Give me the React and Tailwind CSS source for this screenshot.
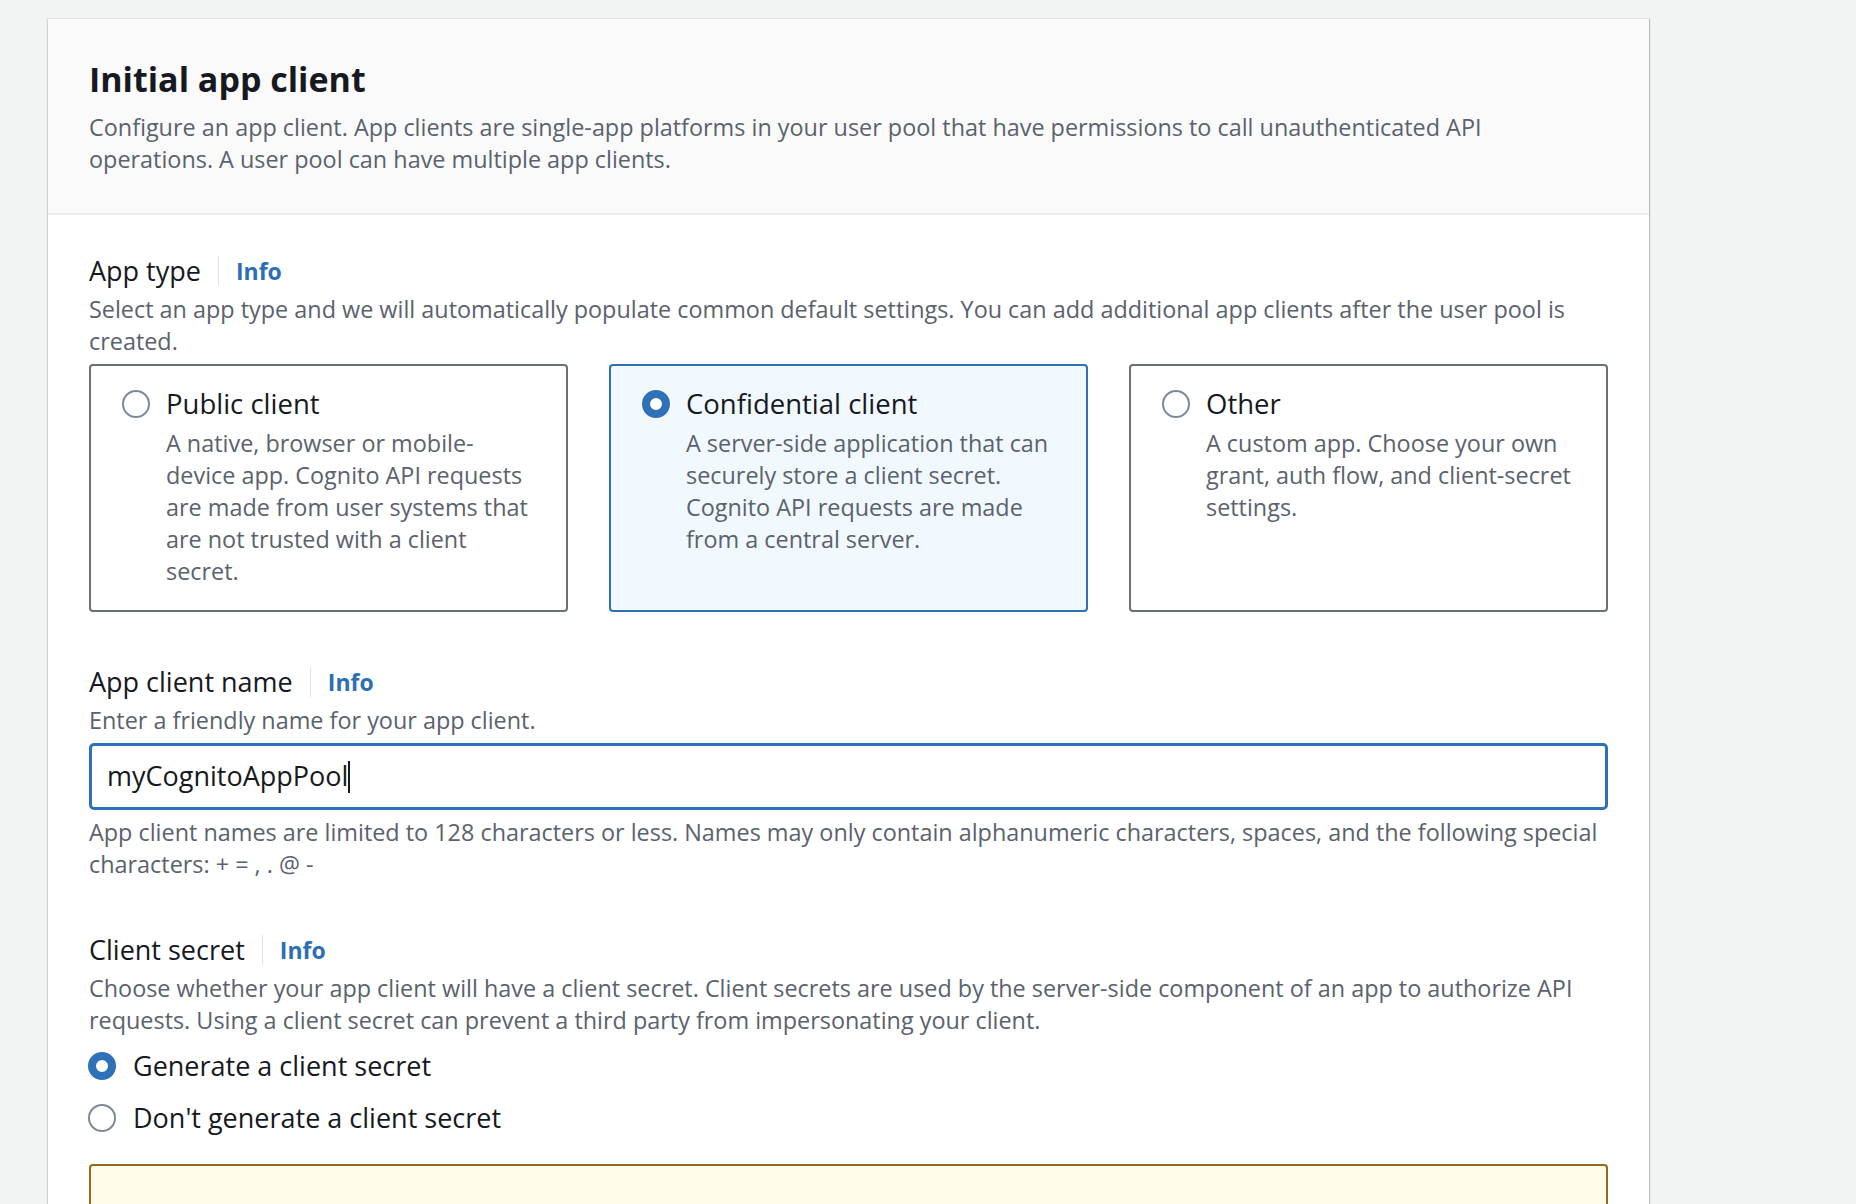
import { useState } from 'react';

const Label = ({ children }) => (
  <div className="flex items-center h-[36px]">
    <span className="text-[27px] text-[#16191f]">{children}</span>
    <span className="mx-[17px] h-[30px] w-px bg-[#e2e4e6]" />
    <a className="text-[23px] font-bold text-[#2d6eb6]">Info</a>
  </div>
);

const Lines = ({ lines, className = '' }) => (
  <p className={`text-[23.4px] leading-[32px] text-[#5a626d] ${className}`}>
    {lines.map((l) => (
      <span key={l} className="block whitespace-nowrap">{l}</span>
    ))}
  </p>
);

const Radio = ({ checked }) =>
  checked ? (
    <span className="shrink-0 w-[28px] h-[28px] rounded-full border-[8px] border-[#2f71b9] bg-white" />
  ) : (
    <span className="shrink-0 w-[28px] h-[28px] rounded-full border-2 border-[#7d8998] bg-white" />
  );

const tiles = [
  {
    id: 'public',
    title: 'Public client',
    lines: ['A native, browser or mobile-', 'device app. Cognito API requests', 'are made from user systems that', 'are not trusted with a client', 'secret.'],
  },
  {
    id: 'confidential',
    title: 'Confidential client',
    lines: ['A server-side application that can', 'securely store a client secret.', 'Cognito API requests are made', 'from a central server.'],
  },
  {
    id: 'other',
    title: 'Other',
    lines: ['A custom app. Choose your own', 'grant, auth flow, and client-secret', 'settings.'],
  },
];

export default function App() {
  const [appType, setAppType] = useState('confidential');
  const [secret, setSecret] = useState(true);

  return (
    <div className="min-h-screen bg-[#f2f3f3] pt-[19px] font-['Open_Sans',sans-serif]">
      <div className="ml-[48px] w-[1601px] bg-white shadow-[1px_0_1px_rgba(0,28,36,0.25),-1px_0_1px_rgba(0,28,36,0.15)]">
        {/* Header */}
        <div className="bg-[#fafafa] border-b-2 border-[#eaeded] px-[41px] pt-[40px] pb-[38px]">
          <h1 className="text-[34px] leading-[40px] font-bold text-[#16191f]">Initial app client</h1>
          <Lines
            className="mt-[12px]"
            lines={[
              'Configure an app client. App clients are single-app platforms in your user pool that have permissions to call unauthenticated API',
              'operations. A user pool can have multiple app clients.',
            ]}
          />
        </div>

        <div className="px-[41px] pt-[38px] pb-[60px]">
          {/* App type */}
          <Label>App type</Label>
          <Lines
            className="mt-[4px]"
            lines={[
              'Select an app type and we will automatically populate common default settings. You can add additional app clients after the user pool is',
              'created.',
            ]}
          />
          <div className="mt-[7px] grid grid-cols-3 gap-[41px]">
            {tiles.map((t) => {
              const selected = appType === t.id;
              return (
                <div
                  key={t.id}
                  role="radio"
                  aria-checked={selected}
                  onClick={() => setAppType(t.id)}
                  className={`cursor-pointer h-[248px] rounded-[4px] border-2 px-[31px] pt-[20px] ${
                    selected ? 'border-[#2f71b9] bg-[#f1f8fe]' : 'border-[#687078] bg-white'
                  }`}
                >
                  <div className="flex items-center gap-[16px] h-[36px]">
                    <Radio checked={selected} />
                    <span className="text-[27.5px] text-[#16191f]">{t.title}</span>
                  </div>
                  <Lines className="mt-[5px] ml-[44px]" lines={t.lines} />
                </div>
              );
            })}
          </div>

          {/* App client name */}
          <div className="mt-[52px]">
            <Label>App client name</Label>
            <Lines className="mt-[4px]" lines={['Enter a friendly name for your app client.']} />
            <div className="mt-[7px] h-[67px] rounded-[5px] border-[3px] border-[#2f71b9] px-[15px] flex items-center">
              <span className="text-[27px] text-[#16191f]">myCognitoAppPool</span>
              <span className="w-[2px] h-[32px] bg-[#16191f]" />
            </div>
            <Lines
              className="mt-[6px]"
              lines={[
                'App client names are limited to 128 characters or less. Names may only contain alphanumeric characters, spaces, and the following special',
                'characters: + = , . @ -',
              ]}
            />
          </div>

          {/* Client secret */}
          <div className="mt-[52px]">
            <Label>Client secret</Label>
            <Lines
              className="mt-[4px]"
              lines={[
                'Choose whether your app client will have a client secret. Client secrets are used by the server-side component of an app to authorize API',
                'requests. Using a client secret can prevent a third party from impersonating your client.',
              ]}
            />
            <div className="mt-[12px] flex flex-col gap-[16px] -ml-[1px]">
              <div role="radio" aria-checked={secret} onClick={() => setSecret(true)} className="cursor-pointer flex items-center gap-[17px] h-[36px]">
                <Radio checked={secret} />
                <span className="text-[27px] text-[#16191f]">Generate a client secret</span>
              </div>
              <div role="radio" aria-checked={!secret} onClick={() => setSecret(false)} className="cursor-pointer flex items-center gap-[17px] h-[36px]">
                <Radio checked={!secret} />
                <span className="text-[27px] text-[#16191f]">Don't generate a client secret</span>
              </div>
            </div>
            <div className="mt-[28px] h-[120px] rounded-[4px] border-2 border-[#8d6a1c] bg-[#fffde9]" />
          </div>
        </div>
      </div>
    </div>
  );
}
